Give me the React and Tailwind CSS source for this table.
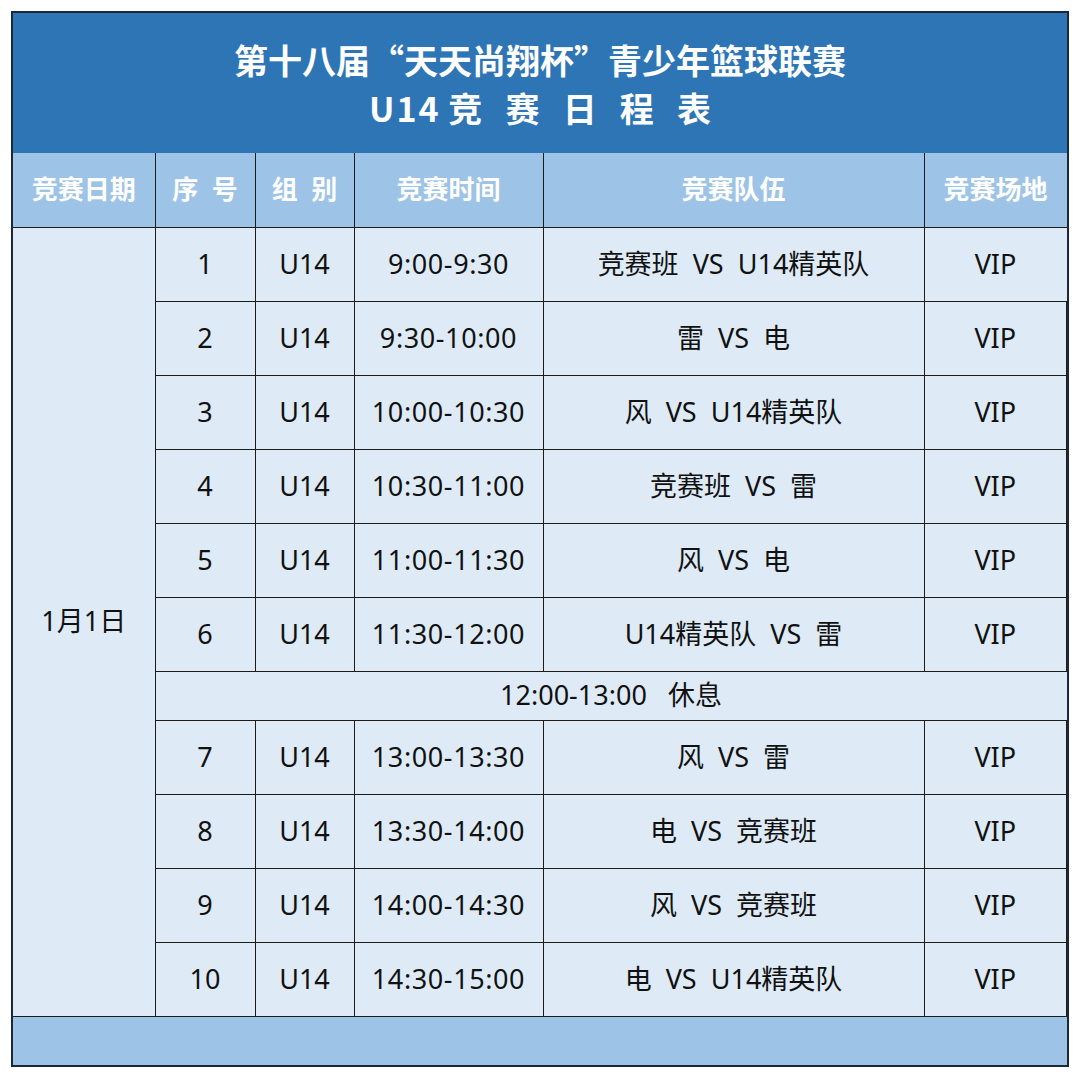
import React from "react";

const games = [
  ["1", "U14", "9:00-9:30", "竞赛班  VS  U14精英队"],
  ["2", "U14", "9:30-10:00", "雷  VS  电"],
  ["3", "U14", "10:00-10:30", "风  VS  U14精英队"],
  ["4", "U14", "10:30-11:00", "竞赛班  VS  雷"],
  ["5", "U14", "11:00-11:30", "风  VS  电"],
  ["6", "U14", "11:30-12:00", "U14精英队  VS  雷"],
];

const games2 = [
  ["7", "U14", "13:00-13:30", "风  VS  雷"],
  ["8", "U14", "13:30-14:00", "电  VS  竞赛班"],
  ["9", "U14", "14:00-14:30", "风  VS  竞赛班"],
  ["10", "U14", "14:30-15:00", "电  VS  U14精英队"],
];

const cell = "border border-[#1c1c1c] text-center align-middle";

function Row({ g }) {
  return (
    <tr className="h-[74px]">
      <td className={cell}>{g[0]}</td>
      <td className={cell}>{g[1]}</td>
      <td className={cell + " tracking-[0.6px]"}>{g[2]}</td>
      <td className={cell + " whitespace-pre"}>{g[3]}</td>
      <td className={cell}>VIP</td>
    </tr>
  );
}

export default function App() {
  return (
    <div className="bg-white w-[1080px] h-[1079px] pt-[11px] pl-[11px] font-['Noto_Sans','Noto_Sans_CJK_SC',sans-serif]">
      <div className="w-[1058px] border-2 border-[#1c2836]">
        <div className="h-[140px] bg-[#2e75b6] flex flex-col items-center justify-center text-white font-bold text-[34px] leading-[48px] font-['Noto_Sans_CJK_SC',sans-serif] pt-[2px]">
          <div>第十八届“天天尚翔杯”青少年篮球联赛</div>
          <div className="whitespace-pre">
            <span className="tracking-[2px]">U14</span>
            {" 竞   赛   日   程   表"}
          </div>
        </div>
        <table className="w-full table-fixed border-collapse text-[27px] text-[#111] bg-[#deebf7]">
          <colgroup>
            <col className="w-[142px]" />
            <col className="w-[100px]" />
            <col className="w-[99px]" />
            <col className="w-[189px]" />
            <col className="w-[381px]" />
            <col />
          </colgroup>
          <thead>
            <tr className="h-[74px] bg-[#9dc3e6] text-white font-bold text-[26px]">
              <th className={cell + " border-t-0 border-l-0"}>竞赛日期</th>
              <th className={cell + " border-t-0 whitespace-pre"}>序  号</th>
              <th className={cell + " border-t-0 whitespace-pre"}>组  别</th>
              <th className={cell + " border-t-0"}>竞赛时间</th>
              <th className={cell + " border-t-0"}>竞赛队伍</th>
              <th className={cell + " border-t-0 border-r-0"}>竞赛场地</th>
            </tr>
          </thead>
          <tbody>
            <tr className="h-[74px]">
              <td rowSpan={11} className={cell + " border-l-0 text-[27px]"}>1月1日</td>
              <td className={cell}>{games[0][0]}</td>
              <td className={cell}>{games[0][1]}</td>
              <td className={cell + " tracking-[0.6px]"}>{games[0][2]}</td>
              <td className={cell + " whitespace-pre"}>{games[0][3]}</td>
              <td className={cell + " border-r-0"}>VIP</td>
            </tr>
            {games.slice(1).map((g) => (
              <Row key={g[0]} g={g} />
            ))}
            <tr className="h-[49px]">
              <td colSpan={5} className={cell + " border-r-0 whitespace-pre"}>
                {"12:00-13:00   休息"}
              </td>
            </tr>
            {games2.map((g) => (
              <Row key={g[0]} g={g} />
            ))}
            <tr className="h-[49px] bg-[#9dc3e6]">
              <td colSpan={6} className={cell + " border-x-0 border-b-0"}></td>
            </tr>
          </tbody>
        </table>
      </div>
    </div>
  );
}
